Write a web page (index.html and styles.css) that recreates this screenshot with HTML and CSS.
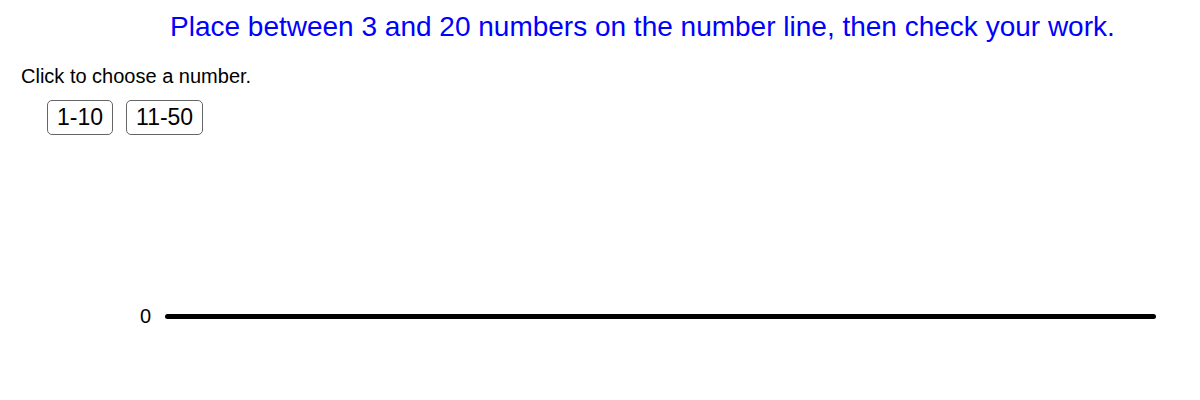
FILE: index.html
```
<!DOCTYPE html>
<html>
<head>
<meta charset="utf-8">
<link rel="stylesheet" href="styles.css">
</head>
<body>
<div class="app">
  <h1 class="title">Place between 3 and 20 numbers on the number line, then check your work.</h1>
  <p class="hint">Click to choose a number.</p>
  <div class="buttons">
    <button class="btn">1-10</button>
    <button class="btn">11-50</button>
  </div>
  <div class="numline">
    <span class="zero">0</span>
    <div class="line"></div>
  </div>
</div>
</body>
</html>
```
FILE: styles.css
```
html, body {
  margin: 0;
  padding: 0;
  background: #fff;
}
.app {
  width: 1200px;
  height: 400px;
  font-family: "Liberation Sans", Arial, sans-serif;
  color: #000;
}
.title {
  margin: 0;
  padding: 11px 0 0 170px;
  font-size: 28px;
  font-weight: normal;
  color: #0000ff;
  line-height: 32px;
  white-space: nowrap;
}
.hint {
  margin: 0;
  padding: 21px 0 0 21px;
  font-size: 20px;
  line-height: 24px;
}
.buttons {
  display: flex;
  gap: 13px;
  padding: 12px 0 0 47px;
}
.btn {
  font-family: "Liberation Sans", Arial, sans-serif;
  font-size: 23px;
  height: 35px;
  padding: 0 9px;
  background: #fff;
  border: 1px solid #666;
  border-radius: 5px;
  color: #000;
  line-height: 33px;
}
.numline {
  display: flex;
  align-items: center;
  padding: 169px 0 0 140px;
}
.zero {
  font-size: 20px;
  width: 25px;
  line-height: 24px;
}
.line {
  width: 991px;
  height: 5px;
  background: #000;
  border-radius: 3px;
}
```
